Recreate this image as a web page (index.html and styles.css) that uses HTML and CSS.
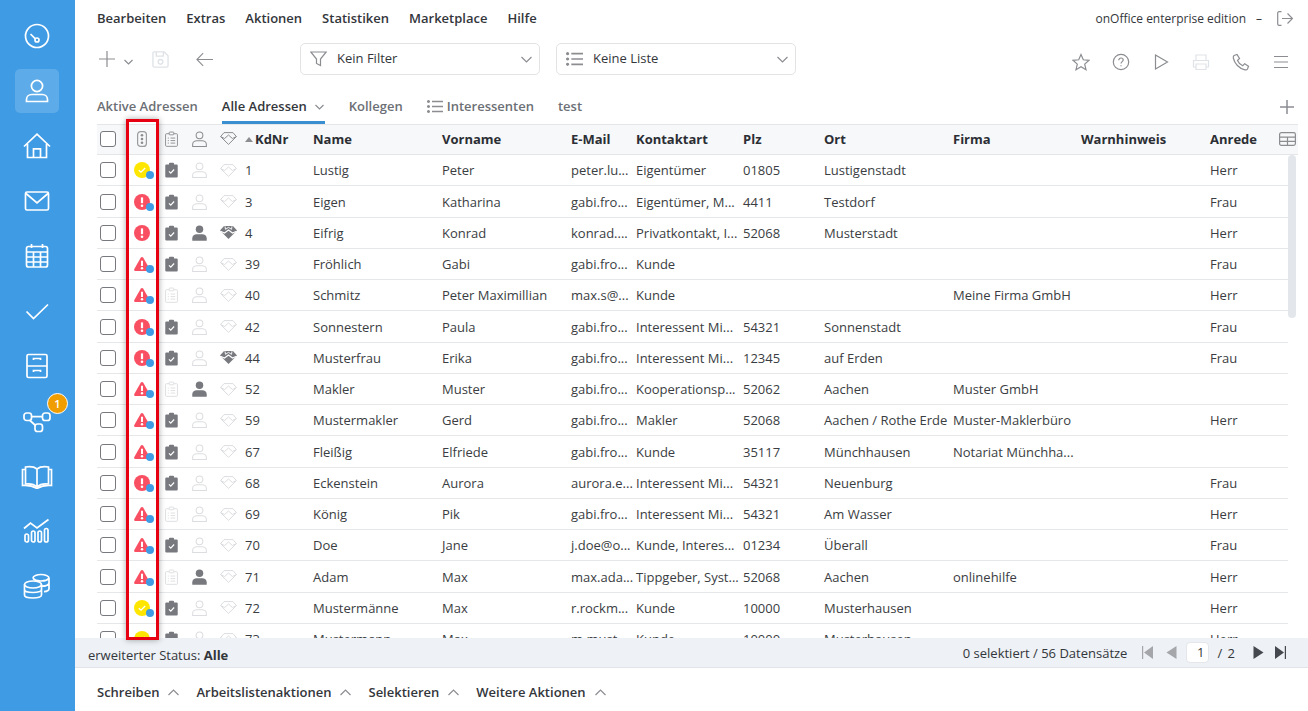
FILE: index.html
```html
<!DOCTYPE html>
<html lang="de">
<head>
    <meta charset="UTF-8">
    <meta name="viewport" content="width=device-width, initial-scale=1.0">
    <title>onOffice - Adressen</title>
    <link rel="stylesheet" href="styles.css">
</head>
<body>
    <svg class="sprite" aria-hidden="true">
        <symbol id="clip-full" viewBox="0 0 14 17"><path d="M1.500 2.500H4.300V1.600A1 1 0 0 1 5.300.6H8.700A1 1 0 0 1 9.700 1.600V2.500H12.500A1.200 1.200 0 0 1 13.700 3.700V15.500A1.200 1.200 0 0 1 12.500 16.700H1.500A1.200 1.200 0 0 1 .3 15.500V3.700A1.200 1.200 0 0 1 1.500 2.500Z" fill="#77797e" stroke="none"/><path d="M4.300 10 6.200 11.800 9.800 8" fill="none" stroke="#fff" stroke-width="1.300"/></symbol>
        <symbol id="clip-empty" viewBox="0 0 14 17"><g fill="none" stroke="#dcdde0" stroke-width="1"><path d="M4.500 2.800H1.600A1 1 0 0 0 .6 3.800V15.400A1 1 0 0 0 1.600 16.400H12.400A1 1 0 0 0 13.400 15.400V3.800A1 1 0 0 0 12.400 2.800H9.500"/><rect x="4.500" y="1" width="5" height="3" rx=".8"/><path d="M3 7.500H4.200M6 7.500H11M3 10.200H4.200M6 10.200H11M3 12.900H4.200M6 12.900H11"/></g></symbol>
        <symbol id="clip-head" viewBox="0 0 14 17"><g fill="none" stroke="#8b8d91" stroke-width="1"><path d="M4.500 2.800H1.600A1 1 0 0 0 .6 3.800V15.400A1 1 0 0 0 1.600 16.400H12.400A1 1 0 0 0 13.400 15.400V3.800A1 1 0 0 0 12.400 2.800H9.500"/><rect x="4.500" y="1" width="5" height="3" rx=".8"/><path d="M3 7.500H4.200M6 7.500H11M3 10.200H4.200M6 10.200H11M3 12.900H4.200M6 12.900H11"/></g></symbol>
        <symbol id="person-line" viewBox="0 0 16 17"><g fill="none" stroke="currentColor" stroke-width="1.100"><circle cx="8" cy="4.600" r="3.600"/><path d="M.7 16.400V14.200C.7 11.800 3 10.400 5.200 10.400H10.800C13 10.400 15.300 11.800 15.300 14.200V16.400Z"/></g></symbol>
        <symbol id="person-full" viewBox="0 0 16 17"><circle cx="8" cy="4.400" r="4" fill="#77797e" stroke="none"/><path d="M.3 16.800V14.200C.3 11.600 2.600 9.900 5 9.900H11C13.400 9.900 15.700 11.600 15.700 14.200V16.800Z" fill="#77797e" stroke="none"/></symbol>
        <symbol id="gem-line" viewBox="0 0 17 13"><g fill="none" stroke="currentColor" stroke-width="1" stroke-linejoin="round"><path d="M4 .6H13L16.400 4.600 8.500 12.400 .6 4.600Z"/><path d="M.6 4.600 4.600 6.500 8.500 3 12.400 6.500 16.400 4.600"/></g></symbol>
        <symbol id="gem-full" viewBox="0 0 17 13"><path d="M4 0H13L17 4.500 8.500 13 0 4.500Z" fill="#77797e" stroke="none"/><path d="M.5 5.300 4.500 7 8.500 4 12.500 7 16.500 5.300" fill="none" stroke="#fff" stroke-width="1.100"/><path d="M5 .3 5.500 3.300 8.500 1.400 11.500 3.300 12 .3" fill="none" stroke="#fff" stroke-width=".9"/></symbol>
        <symbol id="st-ok" viewBox="0 0 16 16"><circle cx="8" cy="8" r="8" fill="#ffe600" stroke="none"/><path d="M4.800 8.200 7 10.200 11.200 6" fill="none" stroke="#fff" stroke-width="1.300"/></symbol>
        <symbol id="st-err" viewBox="0 0 16 16"><circle cx="8" cy="8" r="8" fill="#f94f62" stroke="none"/><path d="M8 3.400V9.200" stroke="#fff" stroke-width="2.200"/><circle cx="8" cy="11.700" r="1.300" fill="#fff" stroke="none"/></symbol>
        <symbol id="st-warn" viewBox="0 0 16 15"><path d="M8 .5C8.600.5 9 .8 9.300 1.300L15.700 12.600C16.200 13.600 15.600 14.600 14.500 14.600H1.500C.4 14.600-.2 13.600.3 12.600L6.700 1.300C7 .8 7.400.5 8 .5Z" fill="#f94f62" stroke="none"/><path d="M8 4.200V9.400" stroke="#fff" stroke-width="2"/><circle cx="8" cy="11.800" r="1.200" fill="#fff" stroke="none"/></symbol>
    </svg>

    <div class="app">
        <nav class="sidebar">
            <a class="side-item"><svg viewBox="0 0 26 26"><circle cx="13" cy="13" r="11.500"/><circle cx="13" cy="17" r="2"/><path d="M11.400 15.800 6.500 11"/></svg></a>
            <a class="side-item active"><svg viewBox="0 0 26 26"><circle cx="13" cy="8" r="5.600"/><path d="M2.500 23.500V21.500C2.500 18.300 5 16.500 7.800 16.500H18.200C21 16.500 23.500 18.300 23.500 21.500V23.500Z"/></svg></a>
            <a class="side-item"><svg viewBox="0 0 28 26"><path d="M1 13.500 14 1.200 27 13.500M4.500 11V24.500H23.500V11"/><path d="M10.500 24.500V15.800H17.500V24.500"/></svg></a>
            <a class="side-item"><svg viewBox="0 0 26 26"><rect x="1.500" y="4" width="23" height="18" rx="1.500"/><path d="M2 5.500 13 15 24 5.500"/></svg></a>
            <a class="side-item"><svg viewBox="0 0 26 26"><rect x="2.500" y="3.500" width="21" height="20.500" rx="2"/><path d="M2.500 9H23.500M2.500 14H23.500M2.500 19H23.500M9.500 9V24M16.500 9V24M7.500 1V5M18.500 1V5"/></svg></a>
            <a class="side-item"><svg viewBox="0 0 26 26"><path d="M2.500 13.500 9.500 20.500 24 6.500"/></svg></a>
            <a class="side-item"><svg viewBox="0 0 26 26"><rect x="3" y="1.500" width="20" height="23" rx="1.500"/><path d="M3 13H23M9.500 7V5.500H16.500V7M9.500 19V17.500H16.500V19"/></svg></a>
            <a class="side-item"><span class="badge">1</span><svg viewBox="0 0 28 26"><rect x="1" y="5" width="7.500" height="7.500" rx="2.500"/><rect x="19.500" y="5" width="7.500" height="7.500" rx="2.500"/><rect x="12" y="16" width="7.500" height="7.500" rx="2.500"/><path d="M8.500 8.700H19.500M7 12.500 12.500 17.500"/></svg></a>
            <a class="side-item"><svg class="book" viewBox="0 0 32 26"><path d="M16 6V24M16 6C13 3.500 8 3.500 4.500 4V21C8.500 20.500 13 21 16 24 19 21 23.500 20.500 27.500 21V4C24 3.500 19 3.500 16 6Z"/><path d="M4.500 6.500H1.500V22.500C7 22 12 23 16 25.500 20 23 25 22 30.500 22.500V6.500H27.500"/></svg></a>
            <a class="side-item"><svg viewBox="0 0 28 26"><path d="M1 10.500 7.500 5 14 10 25.500 1.500"/><rect x="2" y="16" width="3.500" height="8" rx="1.750"/><rect x="8.500" y="13" width="3.500" height="11" rx="1.750"/><rect x="15" y="13" width="3.500" height="11" rx="1.750"/><rect x="21.500" y="10.500" width="3.500" height="13.500" rx="1.750"/></svg></a>
            <a class="side-item"><svg viewBox="0 0 28 26"><ellipse cx="10" cy="11.500" rx="8.500" ry="3.500"/><path d="M1.500 11.500V22C1.500 24 5.500 25 10 25S18.500 24 18.500 22V11.500M1.500 16.500C1.500 18.500 5.500 19.500 10 19.500S18.500 18.500 18.500 16.500M10 5C10 3 14 1.500 18 1.500S26 3 26 5V15.500C26 17 24 18.500 21 18.700M10 5C11 7 15 8 18 8S25 7 26 5M19 13.200C22 13.200 25 12.300 26 10.500"/></svg></a>
        </nav>

        <div class="main">
            <div class="content">
                <header class="menu-row">
                    <a>Bearbeiten</a>
                    <a>Extras</a>
                    <a>Aktionen</a>
                    <a>Statistiken</a>
                    <a>Marketplace</a>
                    <a>Hilfe</a>
                    <span class="edition">onOffice enterprise edition</span>
                    <span class="edition-dash">–</span>
                    <svg class="logout" viewBox="0 0 16 15"><path d="M4.500 .7H2A1.300 1.300 0 0 0 .7 2V13A1.300 1.300 0 0 0 2 14.300H4.500M5 7.500H15.500M10.500 2.500 15.500 7.500 10.500 12.500"/></svg>
                </header>

                <div class="toolbar">
                    <div class="tool-left">
                        <svg class="tool-add" viewBox="0 0 16 16"><path d="M8 0V16M0 8H16"/></svg>
                        <svg class="chev-small" viewBox="0 0 9 6"><path d="M.5 1 4.500 5 8.500 1"/></svg>
                        <svg class="tool-save" viewBox="0 0 18 18"><path d="M2 1H13L17 5V15.500A1.500 1.500 0 0 1 15.500 17H2.500A1.500 1.500 0 0 1 1 15.500V2A1 1 0 0 1 2 1Z"/><path d="M4.500 1V5.500H12V1"/><circle cx="9" cy="11.500" r="2.500"/></svg>
                        <svg class="tool-back" viewBox="0 0 19 16"><path d="M19 8H1M8 1 1 8 8 15"/></svg>
                    </div>
                    <div class="select">
                        <svg viewBox="0 0 17 16"><path d="M.8 1H16.200L10.500 8V14.500L6.500 12.500V8Z"/></svg>
                        <span>Kein Filter</span>
                        <svg class="chev" viewBox="0 0 11 7"><path d="M.5 1 5.500 6 10.500 1"/></svg>
                    </div>
                    <div class="select">
                        <svg class="list-ic" viewBox="0 0 16 13"><path d="M5 1.500H16M5 6.500H16M5 11.500H16"/><path class="dots" d="M1.500 0A1.500 1.500 0 1 0 1.501 0ZM1.500 5A1.500 1.500 0 1 0 1.501 5ZM1.500 10A1.500 1.500 0 1 0 1.501 10Z"/></svg>
                        <span>Keine Liste</span>
                        <svg class="chev" viewBox="0 0 11 7"><path d="M.5 1 5.500 6 10.500 1"/></svg>
                    </div>
                    <div class="tool-right">
                        <svg viewBox="0 0 18 18"><path d="M9 1.500 11.300 6.800 17 7.300 12.700 11.100 14 16.700 9 13.800 4 16.700 5.300 11.100 1 7.300 6.700 6.800Z"/></svg>
                        <svg viewBox="0 0 18 18"><circle cx="9" cy="9" r="7.700"/><path d="M6.800 7.200C6.800 5.800 7.800 5 9 5S11.200 5.800 11.200 7C11.200 8.600 9 8.700 9 10.500"/><path d="M9 12.300V13.300"/></svg>
                        <svg viewBox="0 0 18 18"><path d="M3.500 2 15.500 9 3.500 16Z"/></svg>
                        <svg class="muted" viewBox="0 0 18 18"><path d="M4 7V2H14V7M4 14H1.500V7.500H16.500V14H14M4 11H14V16.500H4Z"/></svg>
                        <svg viewBox="0 0 18 18"><path d="M2 2.500 5 1.500 7.500 5.500 5.500 7.500C6.500 9.800 8.500 11.800 10.700 12.700L12.700 10.700 16.500 13.200 15.500 16C15 16.800 14 17 13 16.800 7 15.500 2.500 10.500 1.300 5 1.200 4 1.300 3 2 2.500Z"/></svg>
                        <svg viewBox="0 0 18 18"><path d="M2 3.500H16M2 9H16M2 14.500H16"/></svg>
                    </div>
                </div>

                <div class="tabs">
                    <a class="tab">Aktive Adressen</a>
                    <a class="tab current">Alle Adressen <svg class="chev-small" viewBox="0 0 9 6"><path d="M.5 1 4.500 5 8.500 1"/></svg></a>
                    <a class="tab">Kollegen</a>
                    <a class="tab with-icon"><svg class="list-ic" viewBox="0 0 16 13"><path d="M5 1.500H16M5 6.500H16M5 11.500H16"/><path class="dots" d="M1.500 0A1.500 1.500 0 1 0 1.501 0ZM1.500 5A1.500 1.500 0 1 0 1.501 5ZM1.500 10A1.500 1.500 0 1 0 1.501 10Z"/></svg>Interessenten</a>
                    <a class="tab">test</a>
                    <svg class="tab-add" viewBox="0 0 14 14"><path d="M7 0V14M0 7H14"/></svg>
                </div>

                <div class="table-wrap">
                    <table class="list">
                        <colgroup>
                            <col class="c-check"><col class="c-status"><col class="c-clip"><col class="c-person"><col class="c-gem">
                            <col class="c-nr"><col class="c-wide"><col class="c-wide"><col class="c-mail"><col class="c-type"><col class="c-plz">
                            <col class="c-wide"><col class="c-firm"><col class="c-wide"><col class="c-anrede"><col class="c-end"><col class="c-scroll">
                        </colgroup>
                        <thead>
                            <tr>
                                <th><input type="checkbox"></th>
                                <th class="ic"><svg class="ic-light" viewBox="0 0 10 16"><rect x=".6" y=".6" width="8.800" height="14.800" rx="3"/><circle cx="5" cy="4.300" r="1.300" class="fill"/><circle cx="5" cy="8" r="1.300" class="fill"/><circle cx="5" cy="11.700" r="1.300" class="fill"/></svg></th>
                                <th class="ic"><svg class="ic-clip"><use href="#clip-head"/></svg></th>
                                <th class="ic head-gray"><svg class="ic-person"><use href="#person-line"/></svg></th>
                                <th class="ic head-gray"><svg class="ic-gem"><use href="#gem-line"/></svg></th>
                                <th class="nr"><span class="sort"></span>KdNr</th>
                                <th>Name</th><th>Vorname</th><th>E-Mail</th><th>Kontaktart</th><th>Plz</th><th>Ort</th><th>Firma</th><th>Warnhinweis</th><th>Anrede</th>
                                <th class="ic cols" colspan="2"><svg viewBox="0 0 17 14"><rect x=".6" y=".6" width="15.800" height="12.800" rx="1.800"/><path d="M.6 5.200H16.400M.6 9.300H16.400M8.500 5.200V13.400"/></svg></th>
                            </tr>
                        </thead>
                        <tbody>
                            <tr><td><input type="checkbox"></td><td class="ic"><span class="st"><svg class="st-ic"><use href="#st-ok"/></svg><i></i></span></td><td class="ic"><svg class="ic-clip"><use href="#clip-full"/></svg></td><td class="ic off"><svg class="ic-person"><use href="#person-line"/></svg></td><td class="ic off"><svg class="ic-gem"><use href="#gem-line"/></svg></td><td class="nr">1</td><td>Lustig</td><td>Peter</td><td>peter.lu...</td><td>Eigentümer</td><td>01805</td><td>Lustigenstadt</td><td></td><td></td><td>Herr</td><td></td><td class="gap"></td></tr>
                            <tr><td><input type="checkbox"></td><td class="ic"><span class="st"><svg class="st-ic"><use href="#st-err"/></svg><i></i></span></td><td class="ic"><svg class="ic-clip"><use href="#clip-full"/></svg></td><td class="ic off"><svg class="ic-person"><use href="#person-line"/></svg></td><td class="ic off"><svg class="ic-gem"><use href="#gem-line"/></svg></td><td class="nr">3</td><td>Eigen</td><td>Katharina</td><td>gabi.fro...</td><td>Eigentümer, M...</td><td>4411</td><td>Testdorf</td><td></td><td></td><td>Frau</td><td></td><td class="gap"></td></tr>
                            <tr><td><input type="checkbox"></td><td class="ic"><span class="st"><svg class="st-ic"><use href="#st-err"/></svg></span></td><td class="ic"><svg class="ic-clip"><use href="#clip-full"/></svg></td><td class="ic"><svg class="ic-person"><use href="#person-full"/></svg></td><td class="ic"><svg class="ic-gem"><use href="#gem-full"/></svg></td><td class="nr">4</td><td>Eifrig</td><td>Konrad</td><td>konrad....</td><td>Privatkontakt, I...</td><td>52068</td><td>Musterstadt</td><td></td><td></td><td>Herr</td><td></td><td class="gap"></td></tr>
                            <tr><td><input type="checkbox"></td><td class="ic"><span class="st"><svg class="st-ic"><use href="#st-warn"/></svg><i></i></span></td><td class="ic"><svg class="ic-clip"><use href="#clip-full"/></svg></td><td class="ic off"><svg class="ic-person"><use href="#person-line"/></svg></td><td class="ic off"><svg class="ic-gem"><use href="#gem-line"/></svg></td><td class="nr">39</td><td>Fröhlich</td><td>Gabi</td><td>gabi.fro...</td><td>Kunde</td><td></td><td></td><td></td><td></td><td>Frau</td><td></td><td class="gap"></td></tr>
                            <tr><td><input type="checkbox"></td><td class="ic"><span class="st"><svg class="st-ic"><use href="#st-warn"/></svg><i></i></span></td><td class="ic"><svg class="ic-clip"><use href="#clip-empty"/></svg></td><td class="ic off"><svg class="ic-person"><use href="#person-line"/></svg></td><td class="ic off"><svg class="ic-gem"><use href="#gem-line"/></svg></td><td class="nr">40</td><td>Schmitz</td><td>Peter Maximillian</td><td>max.s@...</td><td>Kunde</td><td></td><td></td><td>Meine Firma GmbH</td><td></td><td>Herr</td><td></td><td class="gap"></td></tr>
                            <tr><td><input type="checkbox"></td><td class="ic"><span class="st"><svg class="st-ic"><use href="#st-err"/></svg><i></i></span></td><td class="ic"><svg class="ic-clip"><use href="#clip-full"/></svg></td><td class="ic off"><svg class="ic-person"><use href="#person-line"/></svg></td><td class="ic off"><svg class="ic-gem"><use href="#gem-line"/></svg></td><td class="nr">42</td><td>Sonnestern</td><td>Paula</td><td>gabi.fro...</td><td>Interessent Mi...</td><td>54321</td><td>Sonnenstadt</td><td></td><td></td><td>Frau</td><td></td><td class="gap"></td></tr>
                            <tr><td><input type="checkbox"></td><td class="ic"><span class="st"><svg class="st-ic"><use href="#st-err"/></svg><i></i></span></td><td class="ic"><svg class="ic-clip"><use href="#clip-full"/></svg></td><td class="ic off"><svg class="ic-person"><use href="#person-line"/></svg></td><td class="ic"><svg class="ic-gem"><use href="#gem-full"/></svg></td><td class="nr">44</td><td>Musterfrau</td><td>Erika</td><td>gabi.fro...</td><td>Interessent Mi...</td><td>12345</td><td>auf Erden</td><td></td><td></td><td>Frau</td><td></td><td class="gap"></td></tr>
                            <tr><td><input type="checkbox"></td><td class="ic"><span class="st"><svg class="st-ic"><use href="#st-warn"/></svg><i></i></span></td><td class="ic"><svg class="ic-clip"><use href="#clip-empty"/></svg></td><td class="ic"><svg class="ic-person"><use href="#person-full"/></svg></td><td class="ic off"><svg class="ic-gem"><use href="#gem-line"/></svg></td><td class="nr">52</td><td>Makler</td><td>Muster</td><td>gabi.fro...</td><td>Kooperationsp...</td><td>52062</td><td>Aachen</td><td>Muster GmbH</td><td></td><td></td><td></td><td class="gap"></td></tr>
                            <tr><td><input type="checkbox"></td><td class="ic"><span class="st"><svg class="st-ic"><use href="#st-warn"/></svg><i></i></span></td><td class="ic"><svg class="ic-clip"><use href="#clip-full"/></svg></td><td class="ic off"><svg class="ic-person"><use href="#person-line"/></svg></td><td class="ic off"><svg class="ic-gem"><use href="#gem-line"/></svg></td><td class="nr">59</td><td>Mustermakler</td><td>Gerd</td><td>gabi.fro...</td><td>Makler</td><td>52068</td><td>Aachen / Rothe Erde</td><td>Muster-Maklerbüro</td><td></td><td>Herr</td><td></td><td class="gap"></td></tr>
                            <tr><td><input type="checkbox"></td><td class="ic"><span class="st"><svg class="st-ic"><use href="#st-warn"/></svg><i></i></span></td><td class="ic"><svg class="ic-clip"><use href="#clip-full"/></svg></td><td class="ic off"><svg class="ic-person"><use href="#person-line"/></svg></td><td class="ic off"><svg class="ic-gem"><use href="#gem-line"/></svg></td><td class="nr">67</td><td>Fleißig</td><td>Elfriede</td><td>gabi.fro...</td><td>Kunde</td><td>35117</td><td>Münchhausen</td><td>Notariat Münchha...</td><td></td><td></td><td></td><td class="gap"></td></tr>
                            <tr><td><input type="checkbox"></td><td class="ic"><span class="st"><svg class="st-ic"><use href="#st-err"/></svg><i></i></span></td><td class="ic"><svg class="ic-clip"><use href="#clip-full"/></svg></td><td class="ic off"><svg class="ic-person"><use href="#person-line"/></svg></td><td class="ic off"><svg class="ic-gem"><use href="#gem-line"/></svg></td><td class="nr">68</td><td>Eckenstein</td><td>Aurora</td><td>aurora.e...</td><td>Interessent Mi...</td><td>54321</td><td>Neuenburg</td><td></td><td></td><td>Frau</td><td></td><td class="gap"></td></tr>
                            <tr><td><input type="checkbox"></td><td class="ic"><span class="st"><svg class="st-ic"><use href="#st-warn"/></svg><i></i></span></td><td class="ic"><svg class="ic-clip"><use href="#clip-empty"/></svg></td><td class="ic off"><svg class="ic-person"><use href="#person-line"/></svg></td><td class="ic off"><svg class="ic-gem"><use href="#gem-line"/></svg></td><td class="nr">69</td><td>König</td><td>Pik</td><td>gabi.fro...</td><td>Interessent Mi...</td><td>54321</td><td>Am Wasser</td><td></td><td></td><td>Herr</td><td></td><td class="gap"></td></tr>
                            <tr><td><input type="checkbox"></td><td class="ic"><span class="st"><svg class="st-ic"><use href="#st-warn"/></svg><i></i></span></td><td class="ic"><svg class="ic-clip"><use href="#clip-full"/></svg></td><td class="ic off"><svg class="ic-person"><use href="#person-line"/></svg></td><td class="ic off"><svg class="ic-gem"><use href="#gem-line"/></svg></td><td class="nr">70</td><td>Doe</td><td>Jane</td><td>j.doe@o...</td><td>Kunde, Interes...</td><td>01234</td><td>Überall</td><td></td><td></td><td>Frau</td><td></td><td class="gap"></td></tr>
                            <tr><td><input type="checkbox"></td><td class="ic"><span class="st"><svg class="st-ic"><use href="#st-warn"/></svg><i></i></span></td><td class="ic"><svg class="ic-clip"><use href="#clip-empty"/></svg></td><td class="ic"><svg class="ic-person"><use href="#person-full"/></svg></td><td class="ic off"><svg class="ic-gem"><use href="#gem-line"/></svg></td><td class="nr">71</td><td>Adam</td><td>Max</td><td>max.ada...</td><td>Tippgeber, Syst...</td><td>52068</td><td>Aachen</td><td>onlinehilfe</td><td></td><td>Herr</td><td></td><td class="gap"></td></tr>
                            <tr><td><input type="checkbox"></td><td class="ic"><span class="st"><svg class="st-ic"><use href="#st-ok"/></svg><i></i></span></td><td class="ic"><svg class="ic-clip"><use href="#clip-full"/></svg></td><td class="ic off"><svg class="ic-person"><use href="#person-line"/></svg></td><td class="ic off"><svg class="ic-gem"><use href="#gem-line"/></svg></td><td class="nr">72</td><td>Mustermänne</td><td>Max</td><td>r.rockm...</td><td>Kunde</td><td>10000</td><td>Musterhausen</td><td></td><td></td><td>Herr</td><td></td><td class="gap"></td></tr>
                            <tr><td><input type="checkbox"></td><td class="ic"><span class="st"><svg class="st-ic"><use href="#st-ok"/></svg><i></i></span></td><td class="ic"><svg class="ic-clip"><use href="#clip-full"/></svg></td><td class="ic off"><svg class="ic-person"><use href="#person-line"/></svg></td><td class="ic off"><svg class="ic-gem"><use href="#gem-line"/></svg></td><td class="nr">73</td><td>Mustermann</td><td>Max</td><td>m.must...</td><td>Kunde</td><td>10000</td><td>Musterhausen</td><td></td><td></td><td>Herr</td><td></td><td class="gap"></td></tr>
                        </tbody>
                    </table>
                    <div class="scroll-thumb"></div>
                </div>
            </div>

            <div class="status-bar">
                <span class="status-text">erweiterter Status: <b>Alle</b></span>
                <span class="count">0 selektiert / 56 Datensätze</span>
                <div class="pager">
                    <svg class="off" viewBox="0 0 11 13"><path d="M0 0H1.200V13H0ZM11 0V13L2 6.500Z"/></svg>
                    <svg class="off" viewBox="0 0 10 13"><path d="M10 0V13L0 6.500Z"/></svg>
                    <span class="page-input">1</span>
                    <span class="page-total">/ 2</span>
                    <svg viewBox="0 0 10 13"><path d="M0 0V13L10 6.500Z"/></svg>
                    <svg class="page-last" viewBox="0 0 11 13"><path d="M0 0V13L9 6.500ZM9.800 0H11V13H9.800Z"/></svg>
                </div>
            </div>

            <footer class="actions">
                <a>Schreiben <svg viewBox="0 0 11 7"><path d="M.5 6 5.500 1 10.500 6"/></svg></a>
                <a>Arbeitslistenaktionen <svg viewBox="0 0 11 7"><path d="M.5 6 5.500 1 10.500 6"/></svg></a>
                <a>Selektieren <svg viewBox="0 0 11 7"><path d="M.5 6 5.500 1 10.500 6"/></svg></a>
                <a>Weitere Aktionen <svg viewBox="0 0 11 7"><path d="M.5 6 5.500 1 10.500 6"/></svg></a>
            </footer>

            <!-- rote Markierung ueber der Statusspalte -->
            <div class="marker"></div>
        </div>
    </div>
</body>
</html>
```

FILE: styles.css
```css
* {
    box-sizing: border-box;
}

html, body {
    height: 100%;
}

body {
    margin: 0;
    font-family: 'Open Sans', 'Liberation Sans', sans-serif;
    font-size: 13px;
    color: #3a3d42;
    background-color: #fff;
    overflow: hidden;
}

.sprite {
    display: none;
}

svg {
    display: block;
    fill: none;
    stroke: #8b8d91;
    stroke-width: 1.2;
}

.app {
    display: flex;
    height: 100%;
}

/* Seitenleiste */
.sidebar {
    width: 75px;
    flex-shrink: 0;
    background-color: #3f9be4;
    display: flex;
    flex-direction: column;
    align-items: center;
    gap: 11px;
    padding: 14px 1px 0 0;
}

.side-item {
    position: relative;
    width: 44px;
    height: 44px;
    border-radius: 5px;
    display: flex;
    align-items: center;
    justify-content: center;
}

.side-item.active {
    background-color: rgba(255, 255, 255, 0.16);
}

.side-item svg {
    width: 28px;
    height: 26px;
    stroke: #fff;
    stroke-width: 1.7;
}

.side-item svg.book {
    width: 32px;
    flex-shrink: 0;
}

.badge {
    position: absolute;
    top: -6px;
    left: 32px;
    width: 21px;
    height: 21px;
    border-radius: 50%;
    background-color: #f09d00;
    border: 1px solid #fff;
    color: #fff;
    font-size: 11px;
    font-weight: 600;
    line-height: 19px;
    text-align: center;
}

/* Hauptbereich */
.main {
    position: relative;
    flex: 1;
    min-width: 0;
    display: flex;
    flex-direction: column;
}

.content {
    flex: 1;
    min-height: 0;
    display: flex;
    flex-direction: column;
    padding: 0 10px 0 22px;
}

.menu-row {
    height: 36px;
    display: flex;
    align-items: center;
    gap: 20px;
    font-weight: 600;
    color: #33363b;
    flex-shrink: 0;
}

.edition {
    margin-left: auto;
    font-size: 12px;
    font-weight: 400;
}

.edition-dash {
    font-weight: 400;
    font-size: 12px;
    margin-left: -10px;
}

.logout {
    width: 16px;
    height: 15px;
    margin: 0 5px 0 -5px;
}

.toolbar {
    height: 46px;
    display: flex;
    align-items: center;
    gap: 16px;
    flex-shrink: 0;
}

.tool-left {
    width: 187px;
    display: flex;
    align-items: center;
}

.tool-add {
    width: 16px;
    height: 16px;
    margin-left: 2px;
}

.chev-small {
    width: 9px;
    height: 6px;
}

.tool-left .chev-small {
    margin: 5px 0 0 9px;
}

.tool-save {
    width: 17px;
    height: 17px;
    margin-left: 19px;
    stroke: #dfe3e8;
    stroke-width: 1.4;
}

.tool-back {
    width: 17px;
    height: 15px;
    margin-left: 27px;
}

.select {
    width: 240px;
    height: 32px;
    border: 1px solid #e2e3e5;
    border-radius: 5px;
    display: flex;
    align-items: center;
    padding: 0 7px 0 9px;
    color: #33363b;
}

.select span {
    margin-top: -2px;
}

.select svg:first-child {
    width: 17px;
    height: 16px;
    margin-right: 10px;
}

.select .list-ic {
    height: 13px;
}

.select .chev {
    width: 11px;
    height: 7px;
    margin-left: auto;
}

.list-ic {
    stroke-width: 1.6;
}

.list-ic .dots {
    fill: #8b8d91;
    stroke: none;
}

.tool-right {
    margin: 6px 8px 0 auto;
    display: flex;
    gap: 22px;
}

.tool-right svg {
    width: 18px;
    height: 18px;
}

.tool-right .muted {
    stroke: #dfe3e8;
}

.tabs {
    height: 42px;
    display: flex;
    align-items: flex-end;
    gap: 24px;
    flex-shrink: 0;
    color: #6c6f75;
    font-weight: 600;
}

.tab {
    height: 100%;
    display: flex;
    align-items: center;
    padding-top: 6px;
    gap: 8px;
}

.tab.current {
    color: #33363b;
    border-bottom: 3px solid #3a8fd0;
    padding: 9px 1px 0 0;
}

.tab.current .chev-small {
    margin-top: 2px;
}

.tab.with-icon {
    gap: 4px;
}

.tab.with-icon svg {
    width: 16px;
    height: 13px;
}

.tab-add {
    width: 14px;
    height: 14px;
    margin: 0 4px 10px auto;
    stroke-width: 1.5;
}

/* Tabelle */
.table-wrap {
    position: relative;
    flex: 1;
    min-height: 0;
    overflow: hidden;
}

.list {
    width: 100%;
    table-layout: fixed;
    border-collapse: separate;
    border-spacing: 0;
}

.c-check, .c-status { width: 30px; }
.c-clip, .c-gem { width: 28px; }
.c-person { width: 29px; }
.c-nr { width: 68px; }
.c-wide { width: 129px; }
.c-mail { width: 65px; }
.c-type { width: 107px; }
.c-plz { width: 81px; }
.c-firm { width: 128px; }
.c-anrede { width: 65px; }
.c-end { width: 16px; }
.c-scroll { width: 10px; }

.list th {
    height: 31px;
    padding: 0 0 2px 3px;
    text-align: left;
    font-weight: 700;
    color: #2b2e34;
    background-color: #f7f8f9;
    border-top: 1px solid #e4e6e8;
    border-bottom: 1px solid #e4e6e8;
    white-space: nowrap;
}

.list td {
    height: 31.25px;
    padding: 0.5px 0 0 3px;
    border-bottom: 1px solid #e6e7e9;
    white-space: nowrap;
    overflow: hidden;
}

.list td.gap {
    border-bottom: none;
}

.list input {
    appearance: none;
    display: block;
    width: 16px;
    height: 16px;
    margin: 0;
    border: 1px solid #77797e;
    border-radius: 3px;
    background-color: #fff;
}

.list .ic {
    padding-left: 0;
}

.list .ic svg {
    margin: 0 auto;
}

.ic-light {
    width: 10px;
    height: 16px;
    stroke: #9a9c9f;
}

.ic-light .fill {
    fill: #8b8d91;
    stroke: none;
}

.ic-clip {
    width: 13px;
    height: 16px;
}

.ic-person {
    width: 15px;
    height: 16px;
}

.ic-gem {
    width: 17px;
    height: 13px;
}

.head-gray svg {
    color: #8b8d91;
}

.off svg {
    color: #dcdde0;
}

.st {
    position: relative;
    display: block;
    width: 16px;
    margin-left: 7px;
}

.list .ic .st-ic {
    width: 16px;
    height: 16px;
    margin: 0;
}

.st i {
    position: absolute;
    right: -4px;
    bottom: -1px;
    width: 8px;
    height: 8px;
    border-radius: 50%;
    background-color: #3f9be4;
}

.sort {
    display: inline-block;
    width: 0;
    height: 0;
    border: 4px solid transparent;
    border-top: none;
    border-bottom: 5px solid #8b8d91;
    margin-right: 2px;
    vertical-align: 2px;
}

.list th.cols svg {
    width: 17px;
    height: 14px;
    margin: 0 0 0 7px;
}

.scroll-thumb {
    position: absolute;
    top: 31px;
    right: 2px;
    width: 8px;
    height: 163px;
    border-radius: 4px;
    background-color: #e3e6ea;
}

/* Statusleiste und Aktionen */
.status-bar {
    height: 30px;
    flex-shrink: 0;
    display: flex;
    align-items: center;
    padding: 0 22px 0 13px;
    background-color: #eef1f5;
    border-bottom: 1px solid #e0e3e7;
    color: #33363b;
}

.status-text {
    margin-top: 5px;
}

.count {
    margin-left: auto;
}

.pager {
    display: flex;
    align-items: center;
    margin-left: 15px;
}

.pager svg {
    width: 11px;
    height: 13px;
    fill: #45484e;
    stroke: none;
    margin-left: 13px;
}

.pager svg.off {
    fill: #a4a6aa;
}

.pager svg:first-child {
    margin-left: 0;
}

.pager svg.page-last {
    margin-left: 11px;
}

.page-input {
    width: 23px;
    height: 21px;
    margin: 0 8px 0 9px;
    padding-right: 4px;
    background-color: #fff;
    border: 1px solid #e4e6e9;
    border-radius: 4px;
    text-align: right;
    line-height: 19px;
}

.page-total {
    word-spacing: 2px;
    margin-right: 5px;
}

.actions {
    height: 43px;
    flex-shrink: 0;
    display: flex;
    align-items: center;
    gap: 17px;
    padding: 5px 0 0 22px;
    font-weight: 600;
    color: #33363b;
}

.actions a {
    display: flex;
    align-items: center;
    gap: 9px;
}

.actions svg {
    width: 11px;
    height: 7px;
}

.marker {
    position: absolute;
    left: 51px;
    top: 119px;
    width: 33px;
    height: 521px;
    border: 3px solid #e60012;
    box-shadow: 0 0 6px rgba(0, 0, 0, 0.35);
    pointer-events: none;
}
```
